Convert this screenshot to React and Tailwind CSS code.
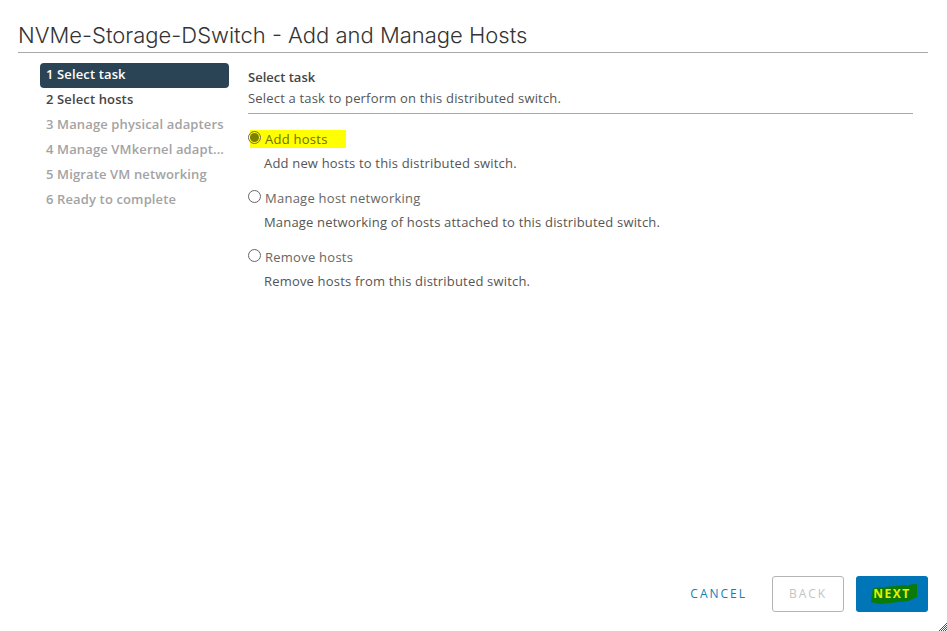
const steps = [
  { label: "1 Select task", cls: "bg-[#2b4455] text-white rounded-[4px]" },
  { label: "2 Select hosts", cls: "text-[#454545]" },
  { label: "3 Manage physical adapters", cls: "text-[#a3a3a3]" },
  { label: "4 Manage VMkernel adapt...", cls: "text-[#a3a3a3]" },
  { label: "5 Migrate VM networking", cls: "text-[#a3a3a3]" },
  { label: "6 Ready to complete", cls: "text-[#a3a3a3]" },
];

const options = [
  { label: "Add hosts", desc: "Add new hosts to this distributed switch.", checked: true },
  { label: "Manage host networking", desc: "Manage networking of hosts attached to this distributed switch." },
  { label: "Remove hosts", desc: "Remove hosts from this distributed switch." },
];

function Radio({ checked }) {
  return (
    <span className="relative z-10 -mt-[2px] w-[13px] h-[13px] rounded-full border border-[#666] flex items-center justify-center shrink-0 bg-transparent">
      {checked && <span className="w-[9px] h-[9px] rounded-full bg-[#7f7f00]" />}
    </span>
  );
}

export default function App() {
  return (
    <div
      className="relative w-[947px] h-[631px] bg-white flex flex-col px-[18px] overflow-hidden"
      style={{ fontFamily: '"Open Sans", "Liberation Sans", sans-serif' }}
    >
      {/* Title */}
      <div className="h-[53px] border-b border-[#a8a8a8] w-[910px] pt-[20px] shrink-0">
        <h1
          className="text-[22px] leading-[30px] text-[#333] whitespace-nowrap"
          style={{ fontFamily: "Inter, sans-serif", fontWeight: 300 }}
        >
          NVMe-Storage-DSwitch - Add and Manage Hosts
        </h1>
      </div>

      <div className="flex flex-1 pt-[10px] pl-[22px]">
        {/* Step list */}
        <div className="w-[189px] flex flex-col shrink-0">
          {steps.map((s) => (
            <div
              key={s.label}
              className={`h-[25px] leading-[22px] pl-[6px] text-[13px] font-semibold tracking-[0.13px] whitespace-nowrap ${s.cls}`}
            >
              {s.label}
            </div>
          ))}
        </div>

        {/* Task panel */}
        <div className="ml-[19px] w-[665px]">
          <div className="h-[51px] border-b border-[#a8a8a8] pt-[5px]">
            <div className="text-[13px] leading-[18px] font-semibold text-[#454545]">Select task</div>
            <div className="text-[13px] leading-[18px] mt-[3px] text-[#555] tracking-[0.18px]">
              Select a task to perform on this distributed switch.
            </div>
          </div>

          <div className="flex flex-col gap-[19px] pt-[16px]">
            {options.map((o) => (
              <div key={o.label} className="h-[40px]">
                <div className="relative flex items-center gap-[4px] h-[16px]">
                  {o.checked && (
                    <span className="absolute left-[2px] top-0 w-[96px] h-[18px] bg-[#ffff00]" />
                  )}
                  <Radio checked={o.checked} />
                  <span
                    className={`relative z-10 text-[13px] leading-[18px] mt-[1px] tracking-[0.25px] ${
                      o.checked ? "text-[#6f6f00]" : "text-[#666]"
                    }`}
                  >
                    {o.label}
                  </span>
                </div>
                <div className="ml-[16px] mt-[8px] text-[13px] leading-[18px] text-[#555] tracking-[0.18px]">
                  {o.desc}
                </div>
              </div>
            ))}
          </div>
        </div>
      </div>

      {/* Footer */}
      <div className="flex justify-end items-center h-[36px] mb-[19px] w-[910px] shrink-0">
        <button className="text-[12px] font-medium tracking-[2px] text-[#0f7fb8] mr-[25px]">CANCEL</button>
        <button className="w-[72px] h-[36px] border border-[#b5b5b5] rounded-[3px] text-[12px] font-medium tracking-[2px] text-[#c4c4c4] mr-[12px]">
          BACK
        </button>
        <button className="relative w-[72px] h-[36px] bg-[#0075b8] rounded-[3px] text-[12px] font-bold tracking-[1.5px] text-[#e8f000]">
          <svg className="absolute left-[14px] top-[7px]" width="48" height="22" viewBox="0 0 48 22">
            <path d="M3 5 L47 1 L47 14 L38 18 L10 21 L1 19 Z" fill="#0a7a08" />
          </svg>
          <span className="relative">NEXT</span>
        </button>
      </div>

      {/* Resize grip */}
      <svg className="absolute right-0 bottom-0" width="8" height="8" viewBox="0 0 8 8">
        <path d="M0 8 L8 0 M2 8 L8 2 M4 8 L8 4 M6 8 L8 6" stroke="#555" strokeWidth="1" />
      </svg>
    </div>
  );
}
